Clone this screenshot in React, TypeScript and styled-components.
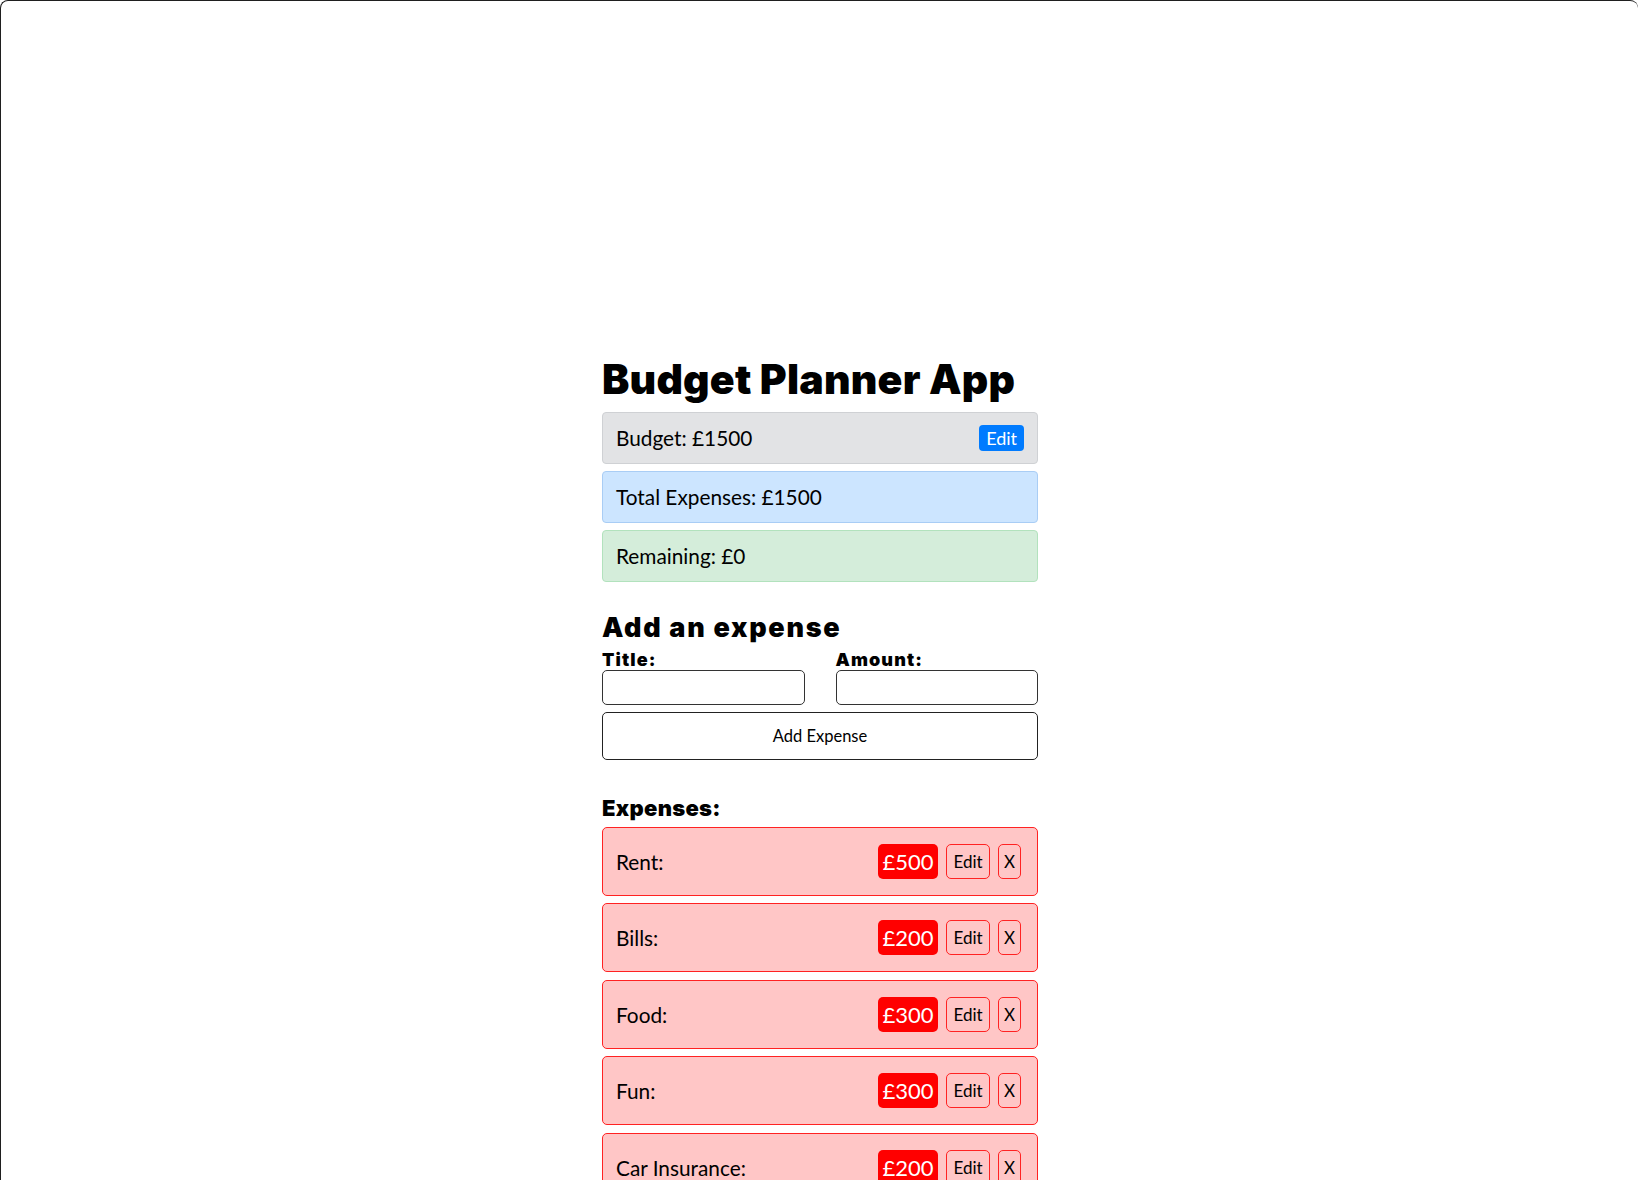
import React from "react";
import styled, { createGlobalStyle } from "styled-components";

const Global = createGlobalStyle`
  html, body { margin: 0; padding: 0; background: #fff; }
  body { font-family: Lato, "Noto Sans", sans-serif; color: #000; }
  * { box-sizing: border-box; }
`;

const heavy = `font-family: Inter, "Noto Sans", sans-serif; font-weight: 900;`;

const Frame = styled.div`
  min-height: 100vh;
  border-top: 1px solid #1f1f1f;
  border-left: 1px solid #1f1f1f;
  border-radius: 8px 8px 0 8px;
  background: #fff;
  overflow: hidden;
`;

const Container = styled.main`
  width: 437px;
  margin: 0 auto;
  padding-top: 354px;
  padding-left: 1px;
`;

const Title = styled.h1`
  ${heavy}
  font-size: 41px;
  letter-spacing: 0.2px;
  line-height: 1.2;
  margin: 0 0 8px;
`;

const Alerts = styled.div`
  display: flex;
  flex-direction: column;
  gap: 7px;
`;

const Alert = styled.div<{ $bg: string; $border: string }>`
  display: flex;
  align-items: center;
  justify-content: space-between;
  padding: 12px 13px 12px 13px;
  font-size: 20.8px;
  line-height: 26px;
  background: ${(p) => p.$bg};
  border: 1px solid ${(p) => p.$border};
  border-radius: 4px;
`;

const BlueButton = styled.button`
  font-family: inherit;
  font-size: 18px;
  line-height: 26px;
  height: 26px;
  padding: 0 7px;
  border: none;
  border-radius: 4px;
  background: #007bff;
  color: #fff;
`;

const SubTitle = styled.h2`
  ${heavy}
  font-size: 27px;
  letter-spacing: 1.7px;
  line-height: 1.2;
  margin: 30px 0 4px;
`;

const FormRow = styled.div`
  display: grid;
  grid-template-columns: minmax(0, 1fr) minmax(0, 1fr);
  column-gap: 31px;
`;

const Field = styled.div`
  display: flex;
  flex-direction: column;
  min-width: 0;
`;

const Label = styled.label`
  ${heavy}
  font-size: 18px;
  letter-spacing: 1.1px;
  line-height: 21px;
  margin-bottom: 0;
`;

const Input = styled.input`
  width: 100%;
  min-width: 0;
  height: 35px;
  border: 1px solid #333;
  border-radius: 5px;
  font-family: inherit;
  font-size: 16px;
  padding: 0 8px;
`;

const AddButton = styled.button`
  width: 100%;
  height: 48px;
  margin-top: 7px;
  border: 1px solid #222;
  border-radius: 5px;
  background: #fff;
  font-family: inherit;
  font-size: 16.5px;
  color: #000;
`;

const ListTitle = styled.h3`
  ${heavy}
  font-size: 22px;
  letter-spacing: 0.3px;
  line-height: 1.2;
  margin: 35px 0 6px;
`;

const List = styled.ul`
  list-style: none;
  margin: 0;
  padding: 0;
  display: flex;
  flex-direction: column;
  gap: 7.5px;
`;

const Item = styled.li`
  display: flex;
  align-items: center;
  padding: 16px 16px 16px 13px;
  background: #ffc6c6;
  border: 1px solid #f22;
  border-radius: 5px;
  font-size: 20.8px;
`;

const ItemName = styled.span`
  flex: 1;
`;

const Badge = styled.span`
  display: inline-flex;
  align-items: center;
  justify-content: center;
  width: 60px;
  height: 35px;
  background: #ff0000;
  color: #fff;
  border-radius: 5px;
  font-size: 22px;
`;

const SmallButton = styled.button<{ $w: number }>`
  width: ${(p) => p.$w}px;
  height: 35px;
  margin-left: 8px;
  padding: 0;
  border: 1px solid #f22;
  border-radius: 5px;
  background: transparent;
  font-family: inherit;
  font-size: 17px;
  color: #000;
`;

const expenses = [
  { name: "Rent", amount: 500 },
  { name: "Bills", amount: 200 },
  { name: "Food", amount: 300 },
  { name: "Fun", amount: 300 },
  { name: "Car Insurance", amount: 200 },
];

export default function App() {
  return (
    <Frame>
      <Global />
      <Container>
        <Title>Budget Planner App</Title>
        <Alerts>
          <Alert $bg="#e2e3e5" $border="#cfd1d4">
            <span>Budget: £1500</span>
            <BlueButton>Edit</BlueButton>
          </Alert>
          <Alert $bg="#cce5ff" $border="#a9cdf5">
            <span>Total Expenses: £1500</span>
          </Alert>
          <Alert $bg="#d4edda" $border="#b2e2bd">
            <span>Remaining: £0</span>
          </Alert>
        </Alerts>
        <SubTitle>Add an expense</SubTitle>
        <FormRow>
          <Field>
            <Label>Title:</Label>
            <Input />
          </Field>
          <Field>
            <Label>Amount:</Label>
            <Input />
          </Field>
        </FormRow>
        <AddButton>Add Expense</AddButton>
        <ListTitle>Expenses:</ListTitle>
        <List>
          {expenses.map((e) => (
            <Item key={e.name}>
              <ItemName>{e.name}:</ItemName>
              <Badge>£{e.amount}</Badge>
              <SmallButton $w={44}>Edit</SmallButton>
              <SmallButton $w={23}>X</SmallButton>
            </Item>
          ))}
        </List>
      </Container>
    </Frame>
  );
}
